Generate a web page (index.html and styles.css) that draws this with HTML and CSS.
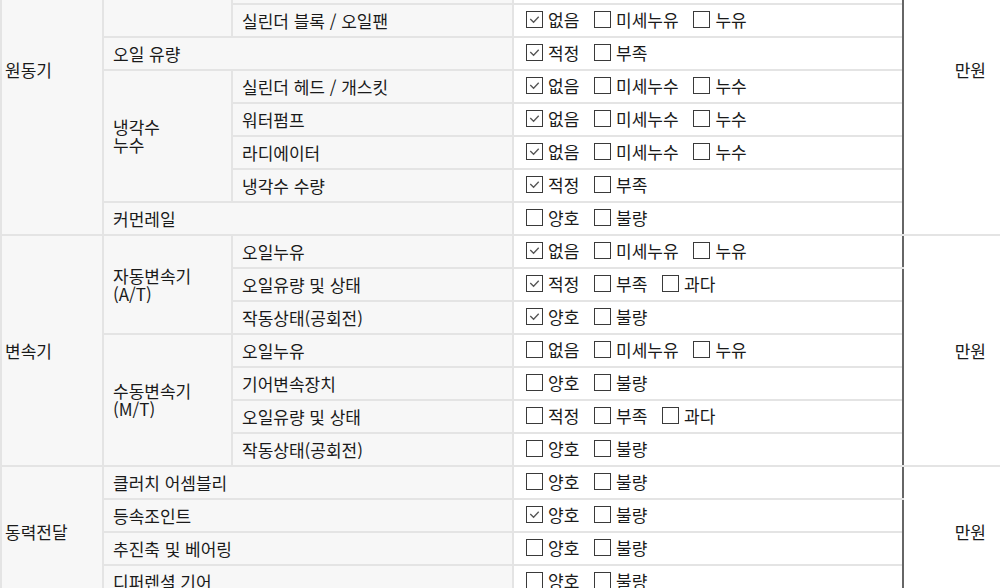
FILE: index.html
```html
<!DOCTYPE html>
<html lang="ko">
<head>
    <meta charset="UTF-8">
    <meta name="viewport" content="width=device-width, initial-scale=1.0">
    <title>성능점검 기록부</title>
    <link rel="stylesheet" href="styles.css">
</head>
<body>
    <table class="check">
        <colgroup>
            <col class="c-cat">
            <col class="c-group">
            <col class="c-item">
            <col class="c-state">
            <col class="c-unit">
        </colgroup>
        <tbody>
            <!-- 원동기 -->
            <tr class="sec">
                <td class="cat" rowspan="10">원동기</td>
                <td class="head" colspan="2">작동상태(공회전)</td>
                <td class="state">
                    <label class="opt"><span class="box on"><svg viewBox="0 0 16 16"><path d="M3.5 7.5 L7 11 L12.5 5"/></svg></span>양호</label>
                    <label class="opt"><span class="box"></span>불량</label>
                </td>
                <td class="unit" rowspan="10">만원</td>
            </tr>
            <tr>
                <td class="head" rowspan="3">오일누유</td>
                <td class="head">로커암 커버(헤드커버)</td>
                <td class="state">
                    <label class="opt"><span class="box on"><svg viewBox="0 0 16 16"><path d="M3.5 7.5 L7 11 L12.5 5"/></svg></span>없음</label>
                    <label class="opt"><span class="box"></span>미세누유</label>
                    <label class="opt"><span class="box"></span>누유</label>
                </td>
            </tr>
            <tr>
                <td class="head">실린더 헤드 / 개스킷</td>
                <td class="state">
                    <label class="opt"><span class="box on"><svg viewBox="0 0 16 16"><path d="M3.5 7.5 L7 11 L12.5 5"/></svg></span>없음</label>
                    <label class="opt"><span class="box"></span>미세누유</label>
                    <label class="opt"><span class="box"></span>누유</label>
                </td>
            </tr>
            <tr>
                <td class="head">실린더 블록 / 오일팬</td>
                <td class="state">
                    <label class="opt"><span class="box on"><svg viewBox="0 0 16 16"><path d="M3.5 7.5 L7 11 L12.5 5"/></svg></span>없음</label>
                    <label class="opt"><span class="box"></span>미세누유</label>
                    <label class="opt"><span class="box"></span>누유</label>
                </td>
            </tr>
            <tr>
                <td class="head" colspan="2">오일 유량</td>
                <td class="state">
                    <label class="opt"><span class="box on"><svg viewBox="0 0 16 16"><path d="M3.5 7.5 L7 11 L12.5 5"/></svg></span>적정</label>
                    <label class="opt"><span class="box"></span>부족</label>
                </td>
            </tr>
            <tr>
                <td class="head" rowspan="4">냉각수<br>누수</td>
                <td class="head">실린더 헤드 / 개스킷</td>
                <td class="state">
                    <label class="opt"><span class="box on"><svg viewBox="0 0 16 16"><path d="M3.5 7.5 L7 11 L12.5 5"/></svg></span>없음</label>
                    <label class="opt"><span class="box"></span>미세누수</label>
                    <label class="opt"><span class="box"></span>누수</label>
                </td>
            </tr>
            <tr>
                <td class="head">워터펌프</td>
                <td class="state">
                    <label class="opt"><span class="box on"><svg viewBox="0 0 16 16"><path d="M3.5 7.5 L7 11 L12.5 5"/></svg></span>없음</label>
                    <label class="opt"><span class="box"></span>미세누수</label>
                    <label class="opt"><span class="box"></span>누수</label>
                </td>
            </tr>
            <tr>
                <td class="head">라디에이터</td>
                <td class="state">
                    <label class="opt"><span class="box on"><svg viewBox="0 0 16 16"><path d="M3.5 7.5 L7 11 L12.5 5"/></svg></span>없음</label>
                    <label class="opt"><span class="box"></span>미세누수</label>
                    <label class="opt"><span class="box"></span>누수</label>
                </td>
            </tr>
            <tr>
                <td class="head">냉각수 수량</td>
                <td class="state">
                    <label class="opt"><span class="box on"><svg viewBox="0 0 16 16"><path d="M3.5 7.5 L7 11 L12.5 5"/></svg></span>적정</label>
                    <label class="opt"><span class="box"></span>부족</label>
                </td>
            </tr>
            <tr>
                <td class="head" colspan="2">커먼레일</td>
                <td class="state">
                    <label class="opt"><span class="box"></span>양호</label>
                    <label class="opt"><span class="box"></span>불량</label>
                </td>
            </tr>

            <!-- 변속기 -->
            <tr class="sec">
                <td class="cat" rowspan="7">변속기</td>
                <td class="head" rowspan="3">자동변속기<br>(A/T)</td>
                <td class="head">오일누유</td>
                <td class="state">
                    <label class="opt"><span class="box on"><svg viewBox="0 0 16 16"><path d="M3.5 7.5 L7 11 L12.5 5"/></svg></span>없음</label>
                    <label class="opt"><span class="box"></span>미세누유</label>
                    <label class="opt"><span class="box"></span>누유</label>
                </td>
                <td class="unit" rowspan="7">만원</td>
            </tr>
            <tr>
                <td class="head">오일유량 및 상태</td>
                <td class="state">
                    <label class="opt"><span class="box on"><svg viewBox="0 0 16 16"><path d="M3.5 7.5 L7 11 L12.5 5"/></svg></span>적정</label>
                    <label class="opt"><span class="box"></span>부족</label>
                    <label class="opt"><span class="box"></span>과다</label>
                </td>
            </tr>
            <tr>
                <td class="head">작동상태(공회전)</td>
                <td class="state">
                    <label class="opt"><span class="box on"><svg viewBox="0 0 16 16"><path d="M3.5 7.5 L7 11 L12.5 5"/></svg></span>양호</label>
                    <label class="opt"><span class="box"></span>불량</label>
                </td>
            </tr>
            <tr>
                <td class="head" rowspan="4">수동변속기<br>(M/T)</td>
                <td class="head">오일누유</td>
                <td class="state">
                    <label class="opt"><span class="box"></span>없음</label>
                    <label class="opt"><span class="box"></span>미세누유</label>
                    <label class="opt"><span class="box"></span>누유</label>
                </td>
            </tr>
            <tr>
                <td class="head">기어변속장치</td>
                <td class="state">
                    <label class="opt"><span class="box"></span>양호</label>
                    <label class="opt"><span class="box"></span>불량</label>
                </td>
            </tr>
            <tr>
                <td class="head">오일유량 및 상태</td>
                <td class="state">
                    <label class="opt"><span class="box"></span>적정</label>
                    <label class="opt"><span class="box"></span>부족</label>
                    <label class="opt"><span class="box"></span>과다</label>
                </td>
            </tr>
            <tr>
                <td class="head">작동상태(공회전)</td>
                <td class="state">
                    <label class="opt"><span class="box"></span>양호</label>
                    <label class="opt"><span class="box"></span>불량</label>
                </td>
            </tr>

            <!-- 동력전달 -->
            <tr class="sec">
                <td class="cat" rowspan="4">동력전달</td>
                <td class="head" colspan="2">클러치 어셈블리</td>
                <td class="state">
                    <label class="opt"><span class="box"></span>양호</label>
                    <label class="opt"><span class="box"></span>불량</label>
                </td>
                <td class="unit" rowspan="4">만원</td>
            </tr>
            <tr>
                <td class="head" colspan="2">등속조인트</td>
                <td class="state">
                    <label class="opt"><span class="box on"><svg viewBox="0 0 16 16"><path d="M3.5 7.5 L7 11 L12.5 5"/></svg></span>양호</label>
                    <label class="opt"><span class="box"></span>불량</label>
                </td>
            </tr>
            <tr>
                <td class="head" colspan="2">추진축 및 베어링</td>
                <td class="state">
                    <label class="opt"><span class="box"></span>양호</label>
                    <label class="opt"><span class="box"></span>불량</label>
                </td>
            </tr>
            <tr>
                <td class="head" colspan="2">디퍼렌셜 기어</td>
                <td class="state">
                    <label class="opt"><span class="box"></span>양호</label>
                    <label class="opt"><span class="box"></span>불량</label>
                </td>
            </tr>
        </tbody>
    </table>
</body>
</html>
```

FILE: styles.css
```css
body {
    margin: 0;
    overflow: hidden;
    background: #fff;
    font-family: "Noto Sans CJK KR", "Noto Sans", sans-serif;
    font-size: 17px;
    color: #1a1a1a;
}
.check {
    width: 1037px;
    table-layout: fixed;
    border-collapse: collapse;
    margin-top: -96px;
}
.c-cat { width: 102px; }
.c-group { width: 129px; }
.c-item { width: 281px; }
.c-state { width: 390px; }
.c-unit { width: 135px; }
.check td {
    height: 33px;
    padding: 0 9px;
    border: 2px solid #e4e4e4;
    line-height: 18px;
    vertical-align: middle;
    box-sizing: border-box;
}
.check tr.sec td {
    border-top: 2px solid #d6d6d6;
}
.check td.cat {
    padding-left: 3px;
    background: #f7f7f7;
}
.check td.head {
    background: #f7f7f7;
}
.check td.state {
    padding-left: 12px;
    background: #fff;
    border-right: 2px solid #666;
}
.check td.unit {
    text-align: right;
    padding-right: 51px;
    background: #fff;
    border-left: 2px solid #666;
}
.opt {
    display: inline-flex;
    align-items: center;
    margin-right: 10px;
}
.box {
    display: inline-block;
    flex-shrink: 0;
    width: 17px;
    height: 17px;
    margin-right: 5px;
    border: 1px solid #3a3a3a;
    box-sizing: border-box;
    background: #fff;
}
.box svg {
    display: block;
    width: 15px;
    height: 15px;
    fill: none;
    stroke: #555;
    stroke-width: 1.4;
}
```
